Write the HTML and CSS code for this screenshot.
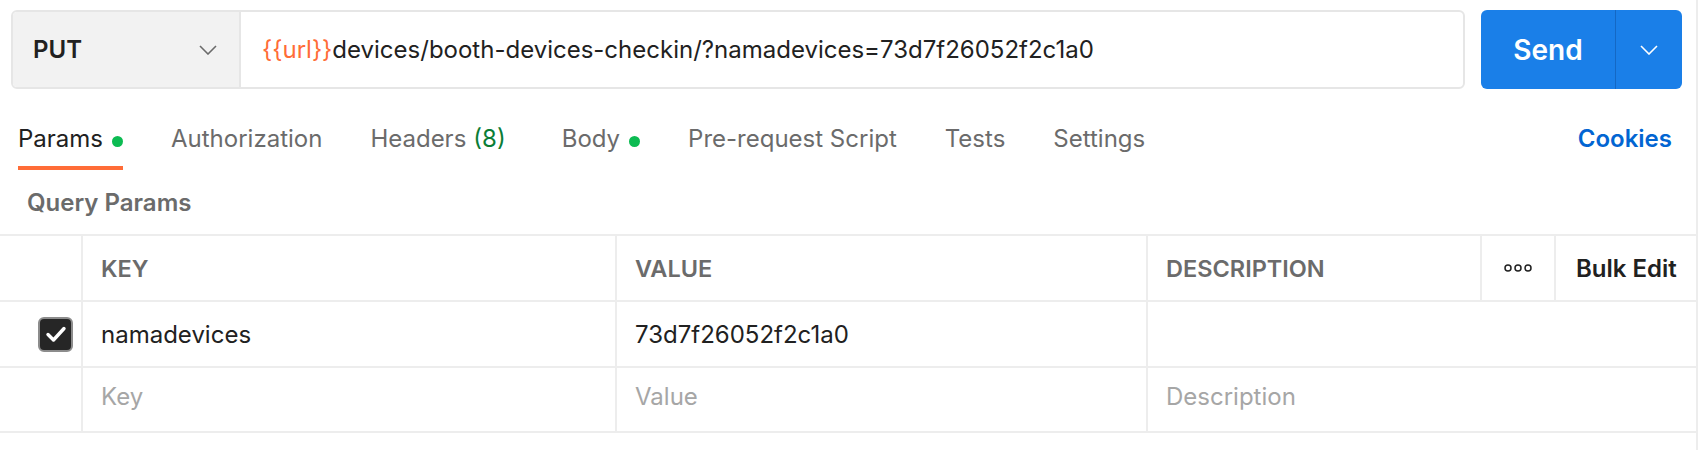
FILE: index.html
```html
<!DOCTYPE html>
<html lang="en">
<head>
<meta charset="utf-8">
<title>Request</title>
<link rel="stylesheet" href="styles.css">
</head>
<body>
<div class="panel">
  <div class="urlbar">
    <div class="urlgroup">
      <div class="method">
        <span class="method-name">PUT</span>
        <svg class="chev" width="18" height="10" viewBox="0 0 18 10"><path d="M1 1l8 8 8-8" fill="none" stroke="#6b6b6b" stroke-width="1.6"/></svg>
      </div>
      <div class="url"><span class="var">{{url}}</span>devices/booth-devices-checkin/?namadevices=73d7f26052f2c1a0</div>
    </div>
    <div class="send">
      <div class="send-main">Send</div>
      <div class="send-drop"><svg width="18" height="10" viewBox="0 0 18 10"><path d="M1 1l8 8 8-8" fill="none" stroke="#ffffff" stroke-width="1.6"/></svg></div>
    </div>
  </div>

  <div class="tabs">
    <div class="tab active">Params<span class="dot"></span></div>
    <div class="tab">Authorization</div>
    <div class="tab headers">Headers <span class="count">(8)</span></div>
    <div class="tab">Body<span class="dot"></span></div>
    <div class="tab">Pre-request Script</div>
    <div class="tab">Tests</div>
    <div class="tab">Settings</div>
    <div class="cookies">Cookies</div>
  </div>

  <div class="section-title">Query Params</div>

  <div class="table">
    <div class="row head">
      <div class="cell c0"></div>
      <div class="cell c1">KEY</div>
      <div class="cell c2">VALUE</div>
      <div class="cell c3h">DESCRIPTION</div>
      <div class="cell c4"><svg width="28" height="8" viewBox="0 0 28 8"><circle cx="4" cy="4" r="3" fill="none" stroke="#212121" stroke-width="1.5"/><circle cx="14" cy="4" r="3" fill="none" stroke="#212121" stroke-width="1.5"/><circle cx="24" cy="4" r="3" fill="none" stroke="#212121" stroke-width="1.5"/></svg></div>
      <div class="cell c5">Bulk Edit</div>
    </div>
    <div class="row">
      <div class="cell c0"><span class="check"><svg width="22" height="18" viewBox="0 0 22 18"><path d="M3 9.5l5.5 5.5L19 3.5" fill="none" stroke="#ffffff" stroke-width="3.4" stroke-linecap="round" stroke-linejoin="round"/></svg></span></div>
      <div class="cell c1 val">namadevices</div>
      <div class="cell c2 val">73d7f26052f2c1a0</div>
      <div class="cell c3"></div>
    </div>
    <div class="row new">
      <div class="cell c0"></div>
      <div class="cell c1 ph">Key</div>
      <div class="cell c2 ph">Value</div>
      <div class="cell c3 ph">Description</div>
    </div>
  </div>
</div>
</body>
</html>
```

FILE: styles.css
```css
* { box-sizing: border-box; }
html, body { margin: 0; padding: 0; background: #ffffff; }
body { font-family: Inter, "Noto Sans", sans-serif; color: #212121; }

.panel {
  width: 1698px;
  height: 450px;
  border-right: 2px solid #ededed;
}

.urlbar {
  display: flex;
  padding: 10px 14px 0 11px;
  gap: 16px;
  height: 89px;
}

.urlgroup {
  flex: 1;
  display: flex;
  border: 2px solid #e6e6e6;
  border-radius: 6px;
  overflow: hidden;
}

.method {
  width: 228px;
  background: #f2f2f2;
  border-right: 2px solid #e6e6e6;
  display: flex;
  align-items: center;
  justify-content: space-between;
  padding: 0 22px 0 20px;
}
.method-name { font-size: 24px; font-weight: 600; color: #212121; }
.chev { display: block; }

.url {
  flex: 1;
  display: flex;
  align-items: center;
  padding-left: 21px;
  font-size: 24px;
  color: #212121;
  white-space: nowrap;
}
.var { color: #ff6c37; }

.send {
  width: 201px;
  display: flex;
  background: #1a7fe8;
  border-radius: 6px;
  color: #ffffff;
}
.send-main {
  width: 135px;
  display: flex;
  align-items: center;
  justify-content: center;
  font-size: 28px;
  font-weight: 600;
  border-right: 1px solid #1468c4;
}
.send-drop {
  flex: 1;
  display: flex;
  align-items: center;
  justify-content: center;
}
.send-drop svg { display: block; }

.tabs {
  display: flex;
  align-items: flex-start;
  padding: 0 24px 0 18px;
  height: 82px;
  gap: 48px;
}
.tab {
  font-size: 24px;
  color: #6b6b6b;
  padding-top: 35px;
  height: 82px;
  display: flex;
  align-items: flex-start;
  white-space: nowrap;
}
.tab.headers { margin-right: 8px; }
.tab.active {
  color: #212121;
  position: relative;
}
.tab.active::after {
  content: "";
  position: absolute;
  left: 0;
  right: 0;
  top: 77px;
  height: 4px;
  background: #ff6c37;
}
.count { color: #0a7d36; margin-left: 7px; }
.dot {
  width: 11px;
  height: 11px;
  border-radius: 50%;
  background: #0cbb52;
  margin: 12px 0 0 9px;
}
.cookies {
  margin-left: auto;
  font-size: 24px;
  font-weight: 600;
  color: #0265d2;
  padding-top: 35px;
}

.section-title {
  font-size: 24px;
  font-weight: 600;
  color: #6b6b6b;
  padding: 17px 0 0 27px;
  height: 63px;
}

.table {
  border-top: 2px solid #ededed;
}
.row {
  display: flex;
  height: 66px;
  border-bottom: 2px solid #ededed;
}
.row.new { height: 65px; }
.row.new .cell { padding-bottom: 6px; }
.cell {
  display: flex;
  align-items: center;
  font-size: 24px;
  padding-left: 18px;
  border-right: 2px solid #ededed;
  white-space: nowrap;
}
.cell:last-child { border-right: 0; }
.c0 { width: 83px; padding: 0 8px 0 0; justify-content: flex-end; }
.c1 { width: 534px; }
.c2 { width: 531px; }
.c3 { flex: 1; }
.c3h { width: 334px; }
.c4 { width: 74px; padding: 0; justify-content: center; }
.c5 { flex: 1; padding-left: 20px; font-weight: 600; color: #212121; }
.head .c1, .head .c2, .head .c3h { font-weight: 600; color: #6b6b6b; font-size: 23.5px; }
.val { color: #212121; }
.ph { color: #a6a6a6; }

.check {
  width: 35px;
  height: 35px;
  border-radius: 6px;
  background: #262626;
  border: 2px solid #8c8c8c;
  display: flex;
  align-items: center;
  justify-content: center;
}
.check svg { display: block; }
```
